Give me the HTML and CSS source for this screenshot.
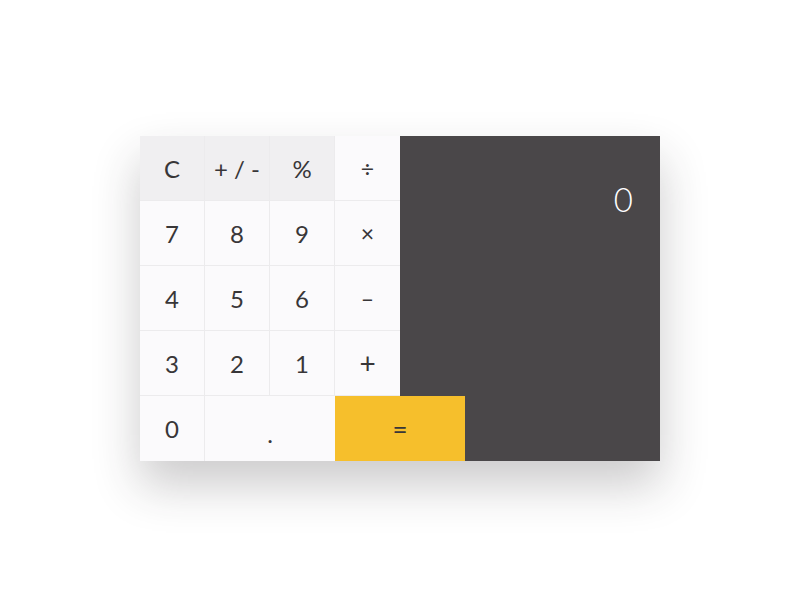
FILE: index.html
```html
<!DOCTYPE html>
<html lang="en">
<head>
    <meta charset="UTF-8">
    <meta name="viewport" content="width=device-width, initial-scale=1.0">
    <title>Calculator</title>
    <link rel="stylesheet" href="styles.css">
</head>
<body>
    <div class="calculator">
        <button class="key fn">C</button>
        <button class="key fn">+ / -</button>
        <button class="key fn">%</button>
        <button class="key op">÷</button>

        <div class="display">
            <div class="value" id="value">0</div>
        </div>

        <button class="key">7</button>
        <button class="key">8</button>
        <button class="key">9</button>
        <button class="key op">×</button>

        <button class="key">4</button>
        <button class="key">5</button>
        <button class="key">6</button>
        <button class="key op">–</button>

        <button class="key">3</button>
        <button class="key">2</button>
        <button class="key">1</button>
        <button class="key op plus">+</button>

        <button class="key bottom">0</button>
        <button class="key bottom dot">.</button>
        <button class="key equals">=</button>
    </div>
</body>
</html>
```

FILE: styles.css
```css
body {
    margin: 0;
    height: 100vh;
    display: flex;
    align-items: center;
    justify-content: center;
    background: #fff;
    font-family: Lato, "Open Sans", sans-serif;
}

.calculator {
    display: grid;
    grid-template-columns: repeat(8, 65px);
    grid-template-rows: repeat(5, 65px);
    margin-top: -3px;
    box-shadow: 0 24px 44px rgba(40, 36, 40, 0.24);
}

.key {
    border: none;
    border-right: 1px solid #ecebed;
    border-bottom: 1px solid #ecebed;
    background: #fbfafc;
    color: #383638;
    font-family: inherit;
    font-size: 24px;
    font-weight: 400;
    padding: 0;
    display: flex;
    align-items: center;
    justify-content: center;
}

.key.fn {
    background: #f0eff1;
}

.key.op {
    border-right: none;
    font-size: 23px;
}

.key.plus {
    font-size: 28px;
}

.key.bottom {
    border-bottom: none;
}

.key.dot {
    grid-column: 2 / 4;
    border-right: none;
    padding-top: 10px;
}

/* = sits over the lower-left corner of the display */
.key.equals {
    grid-column: 4 / 6;
    grid-row: 5;
    z-index: 1;
    border: none;
    background: #f6bf2c;
    font-size: 26px;
}

.display {
    grid-column: 5 / 9;
    grid-row: 1 / 6;
    background: #4a4749;
    color: #fff;
    display: flex;
    justify-content: flex-end;
    align-items: flex-start;
    padding: 43px 27px 0 0;
}

.value {
    font-size: 33px;
    font-weight: 300;
}
```
